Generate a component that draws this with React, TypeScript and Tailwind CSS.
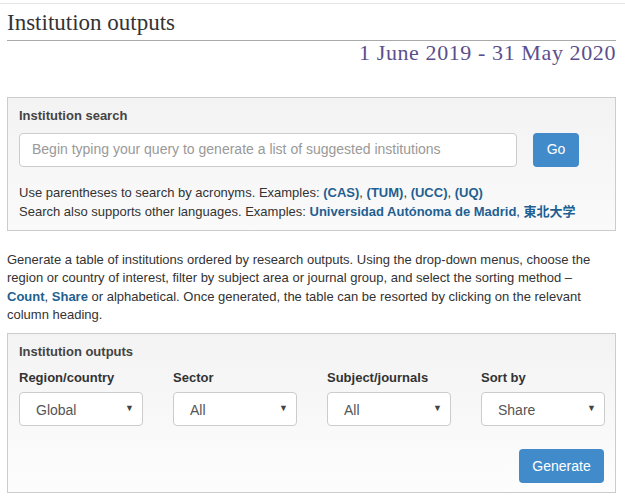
const sans = { fontFamily: '"Liberation Sans", Arial, sans-serif' }
const serif = { fontFamily: '"Liberation Serif", "Times New Roman", serif' }

function Select({ value }: { value: string }) {
  return (
    <div className="relative h-[34px] w-[124px] rounded border border-[#ccc] bg-white">
      <span className="absolute left-[16px] top-[7px] text-[14px] text-[#555]">{value}</span>
      <span className="absolute right-[8px] top-[9px] text-[9px] text-[#444]">▼</span>
    </div>
  )
}

function Field({ label, value }: { label: string; value: string }) {
  return (
    <div className="flex flex-col gap-[4px]">
      <div className="text-[13px] leading-[21px] font-bold text-[#333]">{label}</div>
      <Select value={value} />
    </div>
  )
}

export default function App() {
  return (
    <div className="min-h-screen bg-white text-[#333]" style={sans}>
      <div className="border-t border-[#e5e5e5] mt-[3px] px-[7px] pr-[9px]">
        <h1
          className="mt-[5px] border-b border-[#aaa] pb-[3px] text-[23px] leading-[28px] text-[#333]"
          style={serif}
        >
          Institution outputs
        </h1>
        <div className="text-right text-[22px] leading-[24px] tracking-[0.6px] text-[#5a4f8c]" style={serif}>
          1 June 2019 - 31 May 2020
        </div>

        <div className="mt-[32px] border border-[#ccc] bg-gradient-to-b from-[#f3f3f3] to-[#fafafa] px-[11px] pt-[8px] pb-[9px]">
          <div className="text-[13px] leading-[19.5px] font-bold text-[#444]">Institution search</div>
          <div className="mt-[7px] flex gap-[16px]">
            <div className="flex h-[34px] w-[498px] items-center rounded border border-[#ccc] bg-white px-[12px] text-[14px] text-[#999]">
              Begin typing your query to generate a list of suggested institutions
            </div>
            <button className="h-[34px] w-[46px] rounded bg-[#428bca] text-[14px] text-white">Go</button>
          </div>
          <div className="mt-[16px] text-[13px] leading-[19px]">
            <div>
              Use parentheses to search by acronyms. Examples:{' '}
              <b className="text-[#1f5f91]">(CAS)</b>, <b className="text-[#1f5f91]">(TUM)</b>,{' '}
              <b className="text-[#1f5f91]">(UCC)</b>, <b className="text-[#1f5f91]">(UQ)</b>
            </div>
            <div>
              Search also supports other languages. Examples:{' '}
              <b className="text-[#1f5f91]">Universidad Autónoma de Madrid</b>,{' '}
              <b
                className="text-[#1f5f91]"
                style={{ fontFamily: '"Liberation Sans", "Noto Sans CJK JP", sans-serif' }}
              >
                東北大学
              </b>
            </div>
          </div>
        </div>

        <p className="mt-[20px] text-[13px] leading-[18.5px] text-[#333]">
          Generate a table of institutions ordered by research outputs. Using the drop-down menus, choose the
          region or country of interest, filter by subject area or journal group, and select the sorting method –{' '}
          <b className="text-[#1f5f91]">Count</b>, <b className="text-[#1f5f91]">Share</b> or alphabetical. Once
          generated, the table can be resorted by clicking on the relevant column heading.
        </p>

        <div className="mt-[8px] border border-[#ccc] bg-gradient-to-b from-[#f3f3f3] to-[#fdfdfd] px-[11px] pt-[8px] pb-[9px]">
          <div className="text-[13px] leading-[19.5px] font-bold text-[#444]">Institution outputs</div>
          <div className="mt-[6px] grid grid-cols-4 gap-[30px] w-[586px]">
            <Field label="Region/country" value="Global" />
            <Field label="Sector" value="All" />
            <Field label="Subject/journals" value="All" />
            <Field label="Sort by" value="Share" />
          </div>
          <div className="mt-[23px] flex justify-end">
            <button className="h-[34px] w-[85px] rounded bg-[#428bca] text-[14px] text-white">Generate</button>
          </div>
        </div>
      </div>
    </div>
  )
}
